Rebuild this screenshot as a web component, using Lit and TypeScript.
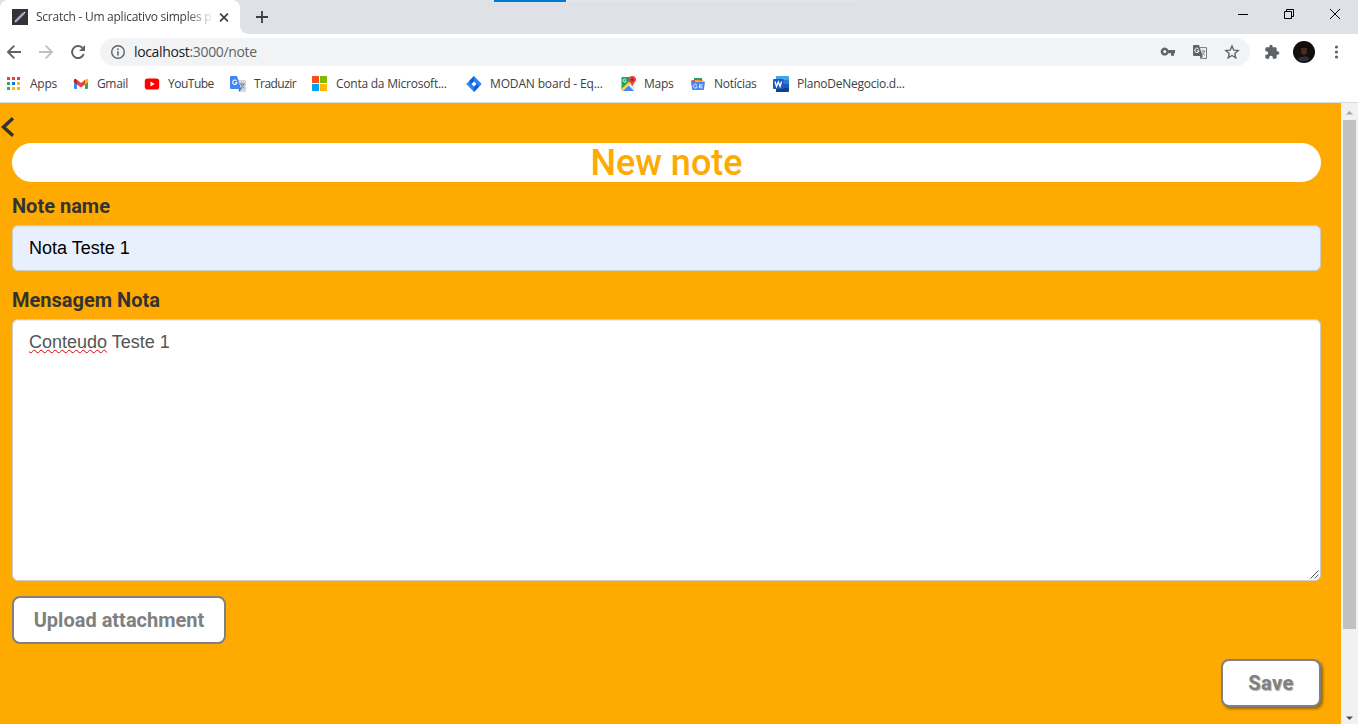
import { LitElement, html, svg, css } from "lit";
import { customElement, property } from "lit/decorators.js";

const bookmarks = [
  { label: "Apps", icon: "apps", width: 27, spacing: -0.27 },
  { label: "Gmail", icon: "gmail", width: 31, spacing: -0.35 },
  { label: "YouTube", icon: "youtube", width: 46, spacing: -0.5 },
  { label: "Traduzir", icon: "translate", width: 42, spacing: -0.55 },
  { label: "Conta da Microsoft...", icon: "microsoft", width: 114, spacing: -0.24 },
  { label: "MODAN board - Eq...", icon: "jira", width: 114, spacing: -0.15 },
  { label: "Maps", icon: "maps", width: 30, spacing: -0.27 },
  { label: "Notícias", icon: "news", width: 43, spacing: -0.27 },
  { label: "PlanoDeNegocio.d...", icon: "word", width: 108, spacing: -0.25 },
];

const dots = [
  "#ea4335", "#ea4335", "#ea4335",
  "#34a853", "#1a73e8", "#fbbc04",
  "#34a853", "#fbbc04", "#fbbc04",
];

const icons: Record<string, unknown> = {
  apps: svg`${dots.map((c, i) => svg`<rect x=${1 + (i % 3) * 5} y=${1 + Math.floor(i / 3) * 5} width="3" height="3" fill=${c} />`)}`,
  gmail: svg`<path d="M1 4v8q0 1 1 1h2V7z" fill="#4285f4"/><path d="M15 4v8q0 1-1 1h-2V7z" fill="#34a853"/><path d="M12 4l1-1q2-1 2.200 1.500V6L12 8.500z" fill="#fbbc04"/><path d="M4 4L3 3Q1 2 .8 4.500V6L4 8.500z" fill="#c5221f"/><path d="M4 3.800l4 3.200 4-3.200V8.500l-4 3-4-3z" fill="#ea4335"/>`,
  youtube: svg`<rect x=".8" y="2.500" width="14.400" height="11" rx="2.800" fill="#f00"/><path d="M6.500 5.500v5l4.200-2.500z" fill="#fff"/>`,
  translate: svg`<path d="M6 4h9q1 0 1 1v10q0 1-1 1H9z" fill="#d4d6d9"/><path d="M9 12h3l-3 4z" fill="#3367d6"/><path d="M1 0h6l4 13H1q-1 0-1-1V1q0-1 1-1z" fill="#4285f4"/><path d="M6.500 4.800a2.200 2.200 0 1 0 .5 2H4.900" fill="none" stroke="#fff" stroke-width="1.100"/><path d="M10 8h5M12.400 7v1M14 8q-1 3-3.500 4M10.800 8q1 3 3.500 4.300" fill="none" stroke="#6b8390" stroke-width=".9"/>`,
  microsoft: svg`<path d="M0 0h7v7H0z" fill="#f6511d"/><path d="M8 0h7v7H8z" fill="#80b900"/><path d="M0 8h7v7H0z" fill="#00a4ef"/><path d="M8 8h7v7H8z" fill="#ffb900"/>`,
  jira: svg`<path d="M8 0l7.700 8L8 16 .3 8z" fill="#2684ff"/><path d="M8 0v5.500L5 8 3 5.200z" fill="#1260d4"/><path d="M8 16v-5.500L11 8l2 2.800z" fill="#1260d4"/><path d="M8 5.600L10.400 8 8 10.400 5.600 8z" fill="#fff"/>`,
  maps: svg`<path d="M2.500 1H11l3.500 4v9q0 1-1 1h-11q-1 0-1-1V2q0-1 1-1z" fill="#e8eaed"/><path d="M2.500 1H10v5l-8.500 8V2q0-1 1-1z" fill="#1fa463"/><path d="M2 15l6-6 6 6z" fill="#4285f4"/><path d="M1.500 13L9 5.500l2 1.700L3.200 15H2z" fill="#ffd04b"/><path d="M12.300 0C9.800 0 8.600 1.700 8.600 3.700c0 2.200 2.600 3.100 3.400 6.300h.6c.8-3.200 3.400-4.100 3.400-6.300C16 1.700 14.800 0 12.300 0z" fill="#ea4335"/><circle cx="12.300" cy="3.700" r="1.300" fill="#8c1d18"/><path d="M6 3.700A1.600 1.600 0 1 0 6.200 5H4.700" fill="none" stroke="#fff" stroke-width=".8"/>`,
  news: svg`<path d="M4 2h8v4H4z" fill="#1ea362"/><path d="M1 4.500l11-1.800L13 7 2 9z" fill="#ea4335"/><path d="M5 4l10 1-1 6H5z" fill="#fbbc04"/><path d="M2 6h12q.8 0 .7.800L14 13q-.1 1-1 1H3q-.9 0-1-1L1.300 6.800Q1.200 6 2 6z" fill="#4285f4"/><path d="M7 9a2 2 0 1 0 .3 1.800H5.500M9.300 8.800h3.500M9.300 10.300h3M9.300 11.800h3.500M9.500 8.500v3.500" stroke="#e4edff" stroke-width=".9" fill="none"/>`,
  word: svg`<path d="M3 0h12q1 0 1 1v3.500H3z" fill="#41a5ee"/><path d="M3 4h13v4H3z" fill="#2b7cd3"/><path d="M3 8h13v4H3z" fill="#185abd"/><path d="M3 12h13v3q0 1-1 1H3z" fill="#103f91"/><rect y="3" width="10.500" height="10" rx=".8" fill="#185abd"/><path d="M2 5.500l1.500 5 1.800-4.600 1.800 4.600 1.500-5" stroke="#fff" stroke-width="1.300" fill="none"/>`,
};

@customElement("browser-bar")
export class BrowserBar extends LitElement {
  static styles = css`
    :host { display: block; flex: none; height: 103px; box-sizing: border-box; background: #fff;
      border-bottom: 1px solid #d9dbdf; font-family: "Open Sans", "Noto Sans", sans-serif; color: #3c4043; }
    svg { display: block; flex: none; }
    .strip { position: relative; height: 34px; background: #dee1e6; display: flex; }
    .tab { width: 240px; box-sizing: border-box; padding-left: 12px; background: #fff; border-radius: 8px 8px 0 0;
      display: flex; align-items: center; }
    .title { width: 176px; margin-left: 8px; font-size: 12px; letter-spacing: -0.25px; white-space: nowrap;
      -webkit-mask-image: linear-gradient(90deg, #000 150px, transparent 179px); line-height: 18px; }
    .foot { align-self: flex-end; width: 8px; height: 8px; background: radial-gradient(circle at 100% 0, transparent 7.500px, #fff 8px); }
    .tabclose { margin-left: 3px; }
    .plus { margin: 11px 0 0 8px; }
    .loading { position: absolute; left: 494px; top: 0; width: 72px; height: 2px; background: #0078d7; }
    .track { position: absolute; left: 566px; top: 0; width: 289px; height: 2px; background: #e4e5e8; }
    .window { display: flex; margin-left: auto; padding: 8px 17px 0 0; gap: 34px; }
    .tools { height: 36px; display: flex; align-items: center; padding-left: 6px; }
    .nav { display: flex; gap: 16px; }
    .address { box-sizing: border-box; height: 28px; width: 1150px; margin-left: 14px; padding: 0 10px 0 10px; border-radius: 14px;
      background: #f1f3f4; display: flex; align-items: center; }
    .url { margin-left: 8px; font-size: 14px; letter-spacing: -0.35px; color: #5f6368; line-height: 20px; flex: 1; white-space: nowrap; }
    .host { color: #202124; }
    .actions { display: flex; gap: 16px; }
    .right { display: flex; align-items: center; margin-left: 14px; }
    .avatar { margin: 0 14px 0 13px; }
    .bookmarks { height: 28px; display: flex; align-items: center; gap: 16px; padding-left: 6px; }
    .bookmark { display: flex; align-items: center; gap: 8px; }
    .label { font-size: 12px; line-height: 18px; white-space: nowrap; }
  `;

  render() {
    return html`
      <div class="strip">
        <div class="tab">
          <svg width="16" height="16" viewBox="0 0 16 16"><path d="M0 0h16v16H0z" fill="#343438"/><path d="M4.300 11.700l7.500-7.500" stroke="#aaa4cc" stroke-width="2.400"/><path d="M2.500 13.500l1-2.800 1.800 1.800zM12.500 2.600l1.100 1.100-1 1-1.100-1.100z" fill="#d5d0e5"/></svg>
          <span class="title">Scratch - Um aplicativo simples p</span>
          <svg class="tabclose" width="16" height="16" viewBox="0 0 16 16"><path d="M5.100 4.600l7.800 7.800M12.900 4.600l-7.800 7.800" stroke="#3c4043" stroke-width="1.700"/></svg>
        </div>
        <div class="foot"></div>
        <svg class="plus" width="12" height="12" viewBox="0 0 12 12"><path d="M6 0v12M0 6h12" stroke="#3c4043" stroke-width="1.800"/></svg>
        <div class="loading"></div><div class="track"></div>
        <div class="window">
          <svg width="12" height="12" viewBox="0 0 12 12"><path d="M1 6.500h10" stroke="#000"/></svg>
          <svg width="12" height="12" viewBox="0 0 12 12" fill="none" stroke="#000"><path d="M1.500 3.500h7v7h-7zM3.500 3V1.500h7v7H9"/></svg>
          <svg width="12" height="12" viewBox="0 0 12 12"><path d="M1 1l10 10M11 1L1 11" stroke="#000"/></svg>
        </div>
      </div>
      <div class="tools">
        <div class="nav">
          <svg width="16" height="16" viewBox="0 0 16 16" fill="none" stroke="#5f6368" stroke-width="1.900"><path d="M15 8H2.300M8.300 1.700L2 8l6.300 6.300"/></svg>
          <svg width="16" height="16" viewBox="0 0 16 16" fill="none" stroke="#bdc1c6" stroke-width="1.900"><path d="M1 8h12.700M7.700 1.700L14 8l-6.300 6.300"/></svg>
          <svg width="16" height="16" viewBox="0 0 16 16"><path d="M13.700 10.200A6 6 0 1 1 12.300 3.800" fill="none" stroke="#5f6368" stroke-width="2"/><path d="M15 1v6H9z" fill="#5f6368"/></svg>
        </div>
        <div class="address">
          <svg width="16" height="16" viewBox="0 0 16 16"><circle cx="8" cy="8" r="6.300" fill="none" stroke="#5f6368" stroke-width="1.400"/><path d="M7.200 7.200h1.600v4.300H7.200zM7.200 4.500h1.600v1.600H7.200z" fill="#5f6368"/></svg>
          <span class="url"><span class="host">localhost</span>:3000/note</span>
          <div class="actions">
            <svg width="16" height="16" viewBox="0 0 16 16" fill="#5f6368"><path fill-rule="evenodd" d="M8.300 6A4 4 0 1 0 8.300 9.200H11v2.500h3V9.200h1V6zM4.800 9.200a1.600 1.600 0 1 1 0-3.200 1.600 1.600 0 0 1 0 3.200z"/></svg>
            <svg width="16" height="16" viewBox="0 0 16 16"><path d="M8 3.600h6.500v10.800H8.800" fill="none" stroke="#757a7f" stroke-width="1"/><path d="M2 1h5l3.500 11H2q-1 0-1-1V2q0-1 1-1zM8 12h3l-2.500 3z" fill="#5f6368"/><path d="M6.600 4.900a2.200 2.200 0 1 0 .5 1.900H4.900" fill="none" stroke="#fff" stroke-width="1"/><path d="M9.300 7h4M11.300 6v1M12.800 7q-.8 2.700-2.800 4M10 8q1 2.400 3 3.500" fill="none" stroke="#757a7f" stroke-width=".8"/></svg>
            <svg width="16" height="16" viewBox="0 0 16 16"><path d="M8 2l1.700 4.100 4.500.4-3.400 2.900 1 4.400L8 11.500l-3.800 2.300 1-4.400-3.400-2.900 4.500-.4z" fill="none" stroke="#5f6368" stroke-width="1.350"/></svg>
          </div>
        </div>
        <div class="right">
          <svg width="16" height="16" viewBox="0 0 24 24" fill="#5f6368"><path d="M20.500 11H19V7c0-1.100-.9-2-2-2h-4V3.500a2.500 2.500 0 0 0-5 0V5H4c-1.100 0-1.990.9-1.990 2v3.800H3.500c1.490 0 2.700 1.210 2.700 2.700s-1.210 2.700-2.700 2.700H2V20c0 1.100.9 2 2 2h3.800v-1.500c0-1.490 1.210-2.700 2.700-2.700 1.490 0 2.700 1.210 2.700 2.700V22H17c1.100 0 2-.9 2-2v-4h1.500a2.500 2.500 0 0 0 0-5z"/></svg>
          <svg class="avatar" width="22" height="22" viewBox="0 0 22 22"><circle cx="11" cy="11" r="11" fill="#160e0e"/><path d="M5 19q1-4 5-3l3-1 4 3q-5 4.500-12 1z" fill="#29323c"/><path d="M8 7q3-4 6 0v5q-3 4-6 0z" fill="#4a2b21"/><path d="M7 7q3-5 8 0-4-1-8 0z" fill="#090606"/></svg>
          <svg width="16" height="16" viewBox="0 0 16 16" fill="#5f6368"><circle cx="7.500" cy="3" r="1.600"/><circle cx="7.500" cy="8" r="1.600"/><circle cx="7.500" cy="13" r="1.600"/></svg>
        </div>
      </div>
      <div class="bookmarks">
        ${bookmarks.map((b) => html`<div class="bookmark">
          <svg width="16" height="16" viewBox="0 0 16 16">${icons[b.icon]}</svg>
          <span class="label" style="width:${b.width}px;letter-spacing:${b.spacing}px">${b.label}</span>
        </div>`)}
      </div>`;
  }
}

@customElement("note-form")
export class NoteForm extends LitElement {
  @property() name = "Nota Teste 1";

  static styles = css`
    :host { display: block; flex: 1; min-width: 0; background: #ffaa00; font-family: Roboto, sans-serif; color: #333; }
    .back { display: block; padding-top: 14px; }
    .form { padding: 6px 20px 0 12px; display: flex; flex-direction: column; }
    .heading { box-sizing: border-box; margin: 0; height: 39px; padding-top: 1px; border-radius: 20px; background: #fff; color: #ffaa00; font-size: 36px;
      line-height: 39px; font-weight: 500; text-align: center; }
    .caption { font-size: 20px; line-height: 22px; font-weight: 700; margin: 13px 0 8px; }
    .caption.second { margin: 18px 0 8px; }
    .field { box-sizing: border-box; border: 1px solid #ccc; border-radius: 6px; padding: 10px 16px; font: 18px/24px "Liberation Sans", Arial, sans-serif;
      box-shadow: inset 0 1px 1px rgba(0,0,0,.075); }
    .name { height: 46px; background: #e8f0fe; color: #000; }
    .message { position: relative; height: 262px; background: #fff; color: #555; }
    .misspelt { text-decoration: underline wavy #e00000 1px; text-decoration-skip-ink: none; text-underline-offset: 0.5px; }
    .grip { position: absolute; right: 1px; bottom: 1px; }
    .button { box-sizing: border-box; height: 48px; border: 2px solid #808080; border-radius: 8px; background: #fff; color: #808080;
      font: 700 20px/44px Roboto, sans-serif; padding: 0; text-align: center; }
    .upload { width: 214px; margin-top: 15px; }
    .save { width: 100px; margin-top: 15px; align-self: flex-end; letter-spacing: 0.5px; box-shadow: 2px 2px 3px rgba(0,0,0,.4); text-shadow: 1px 1px 1px rgba(0,0,0,.3); }
  `;

  render() {
    return html`
      <svg class="back" width="15" height="20" viewBox="0 0 15 20"><path d="M13 1.300L3.500 10l9.500 8.700" fill="none" stroke="#333" stroke-width="3.400"/></svg>
      <div class="form">
        <h1 class="heading">New note</h1>
        <div class="caption">Note name</div>
        <div class="field name">${this.name}</div>
        <div class="caption second">Mensagem Nota</div>
        <div class="field message"><span class="misspelt">Conteudo</span> Teste 1
          <svg class="grip" width="9" height="9" viewBox="0 0 9 9"><path d="M.5 8.500l8-8M4.500 8.500l4-4" stroke="#555" fill="none"/></svg>
        </div>
        <button class="button upload">Upload attachment</button>
        <button class="button save">Save</button>
      </div>`;
  }
}

@customElement("app-root")
export class AppRoot extends LitElement {
  static styles = css`
    :host { display: flex; flex-direction: column; width: 1358px; height: 724px; overflow: hidden; }
    .page { display: flex; flex: 1; min-height: 0; }
    .scroll { box-sizing: border-box; width: 17px; background: #f1f1f1; display: flex; flex-direction: column; align-items: center; padding: 7px 0 3px; }
    .thumb { width: 13px; height: 509px; margin-top: 5px; background: #c1c1c1; }
    .down { margin-top: auto; }
    svg { display: block; }
  `;

  render() {
    return html`
      <browser-bar></browser-bar>
      <div class="page">
        <note-form></note-form>
        <div class="scroll">
          <svg width="7" height="5" viewBox="0 0 7 5"><path d="M0 4.500L3.500 1 7 4.500z" fill="#a3a3a3"/></svg>
          <div class="thumb"></div>
          <svg class="down" width="7" height="5" viewBox="0 0 7 5"><path d="M0 .5L3.500 4 7 .5z" fill="#505050"/></svg>
        </div>
      </div>`;
  }
}
